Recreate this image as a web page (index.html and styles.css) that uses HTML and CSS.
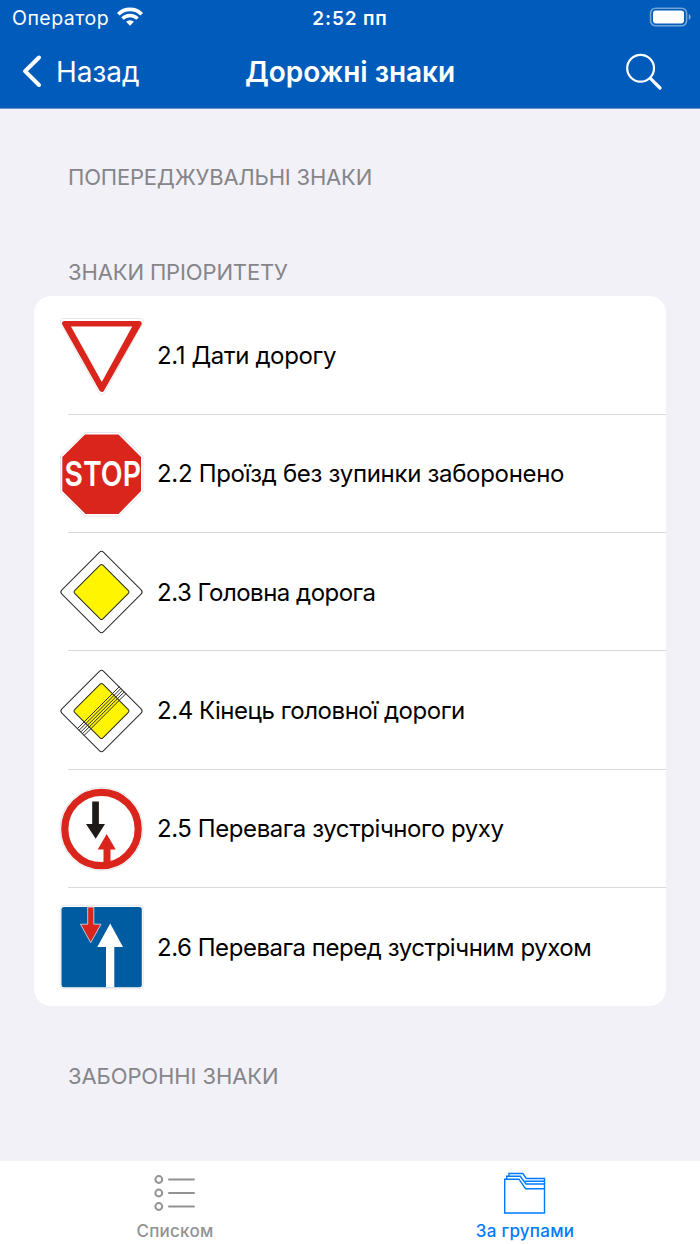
FILE: index.html
```
<!DOCTYPE html>
<html lang="uk">
<head>
    <meta charset="UTF-8">
    <meta name="viewport" content="width=device-width, initial-scale=1.0">
    <title>Дорожні знаки</title>
    <link rel="stylesheet" href="styles.css">
</head>
<body>

    <!-- Шапка -->
    <header>
        <div class="status-bar">
            <div class="carrier">
                <span>Оператор</span>
                <svg width="26" height="20" viewBox="0 0 26 20" fill="none" stroke="#fff">
                    <path d="M1.3 6.2a16.4 16.4 0 0 1 23.4 0" stroke-width="3.7"/>
                    <path d="M5.5 10.6a10.5 10.5 0 0 1 15 0" stroke-width="3.5"/>
                    <path d="M13 17.8l-3.9-4a5.6 5.6 0 0 1 7.8 0z" fill="#fff" stroke="none"/>
                </svg>
            </div>
            <span class="time">2:52 пп</span>
            <svg class="battery" width="41" height="20" viewBox="0 0 41 20">
                <rect x=".6" y=".2" width="36" height="17.6" rx="5" fill="none" stroke="#fff" stroke-opacity=".45" stroke-width="1.6"/>
                <rect x="3" y="2.6" width="31" height="12.8" rx="2.8" fill="#fff"/>
                <path d="M38.8 6c2.4 1 2.4 5 0 6z" fill="#fff" fill-opacity=".5"/>
            </svg>
        </div>
        <nav class="navbar">
            <a class="back">
                <svg width="20" height="34" viewBox="0 0 20 34" fill="none" stroke="#fff" stroke-width="4" stroke-linecap="round" stroke-linejoin="round">
                    <path d="M17 2.5L3 16.2 17 30"/>
                </svg>
                <span>Назад</span>
            </a>
            <h1>Дорожні знаки</h1>
            <svg class="search" width="38" height="38" viewBox="0 0 38 38" fill="none" stroke="#fff" stroke-linecap="round">
                <circle cx="15.6" cy="15.2" r="13.4" stroke-width="2.2"/>
                <path d="M25.6 25.7L35 35" stroke-width="3.2"/>
            </svg>
        </nav>
    </header>

    <!-- Список знаков -->
    <main>
        <h2 class="group-title first">ПОПЕРЕДЖУВАЛЬНІ ЗНАКИ</h2>
        <h2 class="group-title second">ЗНАКИ ПРІОРИТЕТУ</h2>

        <ul class="signs">
            <li>
                <svg width="84" height="84" viewBox="0 0 84 84">
                    <path d="M3 4.5h77.4a2.8 2.8 0 0 1 2.4 4.4L44.2 79a2.8 2.8 0 0 1-5 0L.8 8.9A2.8 2.8 0 0 1 3 4.5z" fill="#fff" stroke="#e6e6e8"/>
                    <path d="M4.6 9.5h74.6L41.8 75.4z" fill="#da251d" stroke="#da251d" stroke-width="5" stroke-linejoin="round"/>
                    <path d="M11 12.5h61.2L41.8 68z" fill="#fff"/>
                </svg>
                <span class="name give-way">2.1 Дати дорогу</span>
            </li>
            <li>
                <svg width="84" height="84" viewBox="0 0 84 84">
                    <path d="M25 .5h34L83 24v36L59 84H25L.5 60V24z" fill="#fff" stroke="#e6e6e8"/>
                    <path d="M25 2.5h33.5L81 25v34L58.5 82h-33L2.3 59V25z" fill="#da251d"/>
                    <text class="stop" x="4.5" y="54.3" textLength="76.5" lengthAdjust="spacingAndGlyphs">STOP</text>
                </svg>
                <span class="name stop-name">2.2 Проїзд без зупинки заборонено</span>
            </li>
            <li>
                <svg width="84" height="84" viewBox="0 0 84 84" stroke="#2b2a29">
                    <rect x="12" y="12.5" width="59" height="59" rx="3" transform="rotate(45 41.5 42)" fill="#fff"/>
                    <rect x="21.5" y="22" width="40" height="40" rx="2" transform="rotate(45 41.5 42)" fill="#fff500"/>
                </svg>
                <span class="name main-road">2.3 Головна дорога</span>
            </li>
            <li>
                <svg width="84" height="84" viewBox="0 0 84 84" stroke="#2b2a29">
                    <rect x="12" y="12.5" width="59" height="59" rx="3" transform="rotate(45 41.5 42)" fill="#fff"/>
                    <rect x="21.5" y="22" width="40" height="40" rx="2" transform="rotate(45 41.5 42)" fill="#fff500"/>
                    <path d="M17.5 59.5l42-42M19.2 61.2l42-42M20.9 62.9l42-42M22.6 64.6l42-42M24.3 66.3l42-42"/>
                </svg>
                <span class="name main-road-end">2.4 Кінець головної дороги</span>
            </li>
            <li>
                <svg width="84" height="84" viewBox="0 0 84 84">
                    <circle cx="41.5" cy="42" r="41.5" fill="#fff" stroke="#e6e6e8"/>
                    <circle cx="41.5" cy="42" r="36.7" fill="#fff" stroke="#da251d" stroke-width="7.2"/>
                    <path d="M32.2 14.5h6.7V37H45l-9.3 14.7L26 37h6.2z" fill="#1f1a17"/>
                    <path d="M46.7 47l9 15.5h-5.2V76h-7V62.5h-5.8z" fill="#da251d"/>
                </svg>
                <span class="name oncoming">2.5 Перевага зустрічного руху</span>
            </li>
            <li>
                <svg width="84" height="84" viewBox="0 0 84 84">
                    <rect x=".1" y=".3" width="83" height="83.5" rx="4" fill="#fff" stroke="#e6e6e8"/>
                    <rect x="1.5" y="2" width="80.3" height="80.3" rx="2.5" fill="#005ca1"/>
                    <path d="M27.7 2v17.2h-7.2l10.2 18.5L41 19.2h-7.2V2z" fill="#da251d" stroke="#c8d5e5" stroke-width=".9"/>
                    <path d="M50.2 18.5L63 42h-8.7v40.3H46V42h-8.7z" fill="#fff"/>
                </svg>
                <span class="name over-oncoming">2.6 Перевага перед зустрічним рухом</span>
            </li>
        </ul>

        <h2 class="group-title third">ЗАБОРОННІ ЗНАКИ</h2>
    </main>

    <!-- Нижнее меню -->
    <footer>
        <a class="tab">
            <svg width="42" height="42" viewBox="0 0 42 42" fill="none" stroke="#929292" stroke-width="2" stroke-linecap="round">
                <circle cx="4.8" cy="7.5" r="3.4"/>
                <circle cx="4.8" cy="21" r="3.4"/>
                <circle cx="4.8" cy="34.5" r="3.4"/>
                <path d="M15 7.5h25M15 21h25M15 34.5h25"/>
            </svg>
            <span>Списком</span>
        </a>
        <a class="tab active">
            <svg width="42" height="42" viewBox="0 0 42 42" fill="none" stroke="#007aff" stroke-width="1.4">
                <path d="M.7 7.2H15l6.5 9.5h19V41H.7z"/>
                <path d="M2.7 7.2V4.3h13.6L22 12h18.5v4.7"/>
                <path d="M4.9 4.3V1.5h13.9l3.5 5h18.2V12M20.5 9.2h20"/>
            </svg>
            <span>За групами</span>
        </a>
    </footer>

</body>
</html>
```
FILE: styles.css
```
* {
    margin: 0;
    padding: 0;
    box-sizing: border-box;
}

body {
    display: flex;
    flex-direction: column;
    height: 1244px;
    background-color: #f2f1f7;
    color: black;
    font-family: Inter, Roboto, sans-serif;
    overflow: hidden;
}

svg {
    display: block;
    flex-shrink: 0;
    overflow: visible;
}

/* Шапка */
header {
    height: 109px;
    background-color: #005bbb;
    border-bottom: 1px solid #6d94c5;
    color: white;
}

.status-bar {
    display: grid;
    grid-template-columns: 1fr auto 1fr;
    align-items: center;
    height: 36px;
    padding: 0 9px;
}

.carrier {
    display: flex;
    align-items: center;
    gap: 8px;
    padding-left: 3px;
    font-size: 19.5px;
    letter-spacing: 0.5px;
}

.time {
    font-size: 19px;
    font-weight: 600;
    letter-spacing: 0.85px;
}

.battery {
    justify-self: end;
}

.navbar {
    display: grid;
    grid-template-columns: 1fr auto 1fr;
    align-items: center;
    height: 71px;
    padding: 0 22px;
}

.back {
    display: flex;
    align-items: center;
    gap: 14px;
    font-size: 28px;
}

h1 {
    font-size: 28px;
    font-weight: 600;
    letter-spacing: -0.05px;
}

.search {
    justify-self: end;
    margin-right: 15px;
}

/* Список */
main {
    flex: 1;
    padding: 0 34px;
}

.group-title {
    padding-left: 34px;
    line-height: 28px;
    font-size: 22px;
    font-weight: 400;
    letter-spacing: -0.2px;
    color: #85858a;
}

.first {
    margin-top: 54px;
}

.second {
    margin-top: 67px;
    letter-spacing: -0.13px;
}

.third {
    margin-top: 55.6px;
    letter-spacing: -0.1px;
}

.signs {
    height: 710px;
    margin-top: 10.4px;
    display: grid;
    grid-template-rows: repeat(6, 1fr);
    list-style: none;
    background-color: white;
    border-radius: 17px;
}

.signs li {
    display: flex;
    align-items: center;
    gap: 13px;
    padding-left: 26px;
    background: linear-gradient(#d9d9dc, #d9d9dc) 34px 100% / 100% 1px no-repeat;
}

.signs li:last-child {
    background: none;
}

.name {
    font-size: 24px;
    white-space: nowrap;
}

.give-way {
    letter-spacing: -0.36px;
}

.stop-name {
    letter-spacing: -0.31px;
}

.main-road {
    letter-spacing: -0.5px;
}

.main-road-end {
    letter-spacing: -0.46px;
}

.oncoming {
    letter-spacing: -0.43px;
}

.over-oncoming {
    letter-spacing: -0.46px;
}

.stop {
    font-size: 33.5px;
    font-weight: 600;
    fill: white;
}

/* Нижнее меню */
footer {
    display: grid;
    grid-template-columns: 1fr 1fr;
    height: 83px;
    padding-top: 11px;
    background-color: white;
}

.tab {
    display: flex;
    flex-direction: column;
    align-items: center;
    gap: 6px;
    font-size: 17px;
    line-height: 22px;
    font-weight: 500;
    letter-spacing: 0.25px;
    color: #929292;
}

.active {
    color: #007aff;
}
```
